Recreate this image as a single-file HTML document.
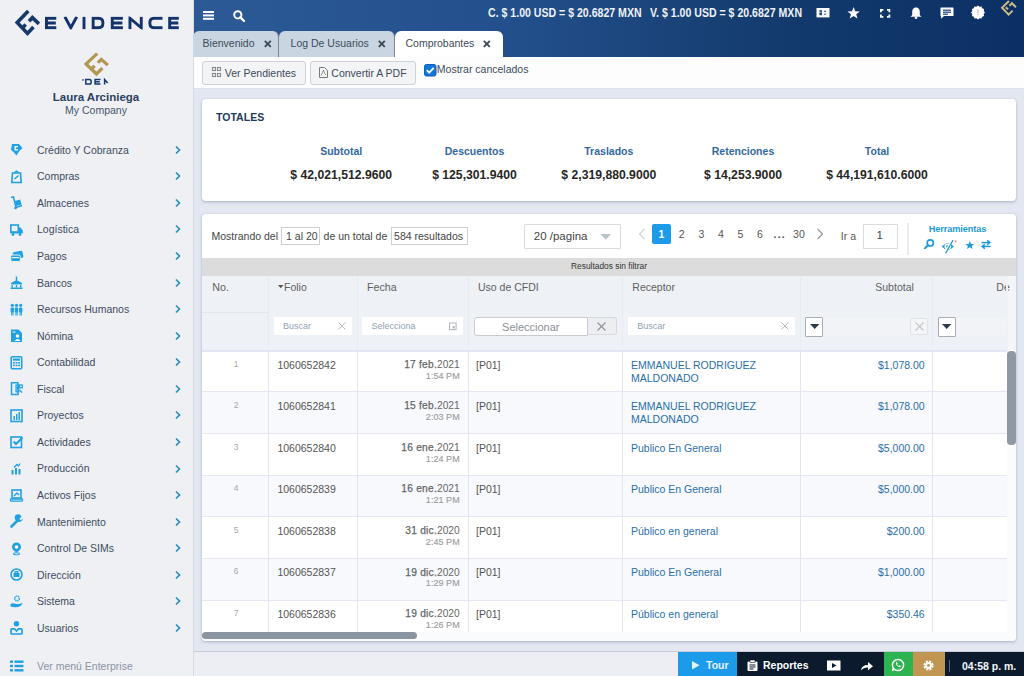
<!DOCTYPE html>
<html><head><meta charset="utf-8">
<style>
*{box-sizing:border-box;margin:0;padding:0}
html,body{width:1024px;height:676px;overflow:hidden;font-family:"Liberation Sans",sans-serif;background:#e4e8f1;position:relative}
.a{position:absolute}
.tx{line-height:1;white-space:nowrap}
svg{overflow:visible}
</style></head><body>

<div class="a" style="left:0px;top:0px;width:193px;height:676px;background:#eef0f4"></div>
<div class="a" style="left:193px;top:0px;width:1px;height:676px;background:#d5dae3"></div>
<svg class="a" style="left:0px;top:0px" width="60" height="45" viewBox="0 0 60 45"><g fill="none" stroke="#16386c" stroke-width="3.6" stroke-linejoin="miter" stroke-miterlimit="4"><polyline points="28.3,11.1 17.2,22.6 27.5,33.45 33.45,27.1"/><polyline points="22.4,27.9 25.7,24.6"/><polyline points="29,21.3 32.4,17.65 38.95,23.85"/></g></svg>
<svg class="a" style="left:0px;top:0px" width="190" height="40" viewBox="0 0 190 40"><defs><clipPath id="lc"><rect x="40" y="16.6" width="145" height="12.8"/></clipPath></defs><g fill="none" stroke="#13336a" stroke-width="2.9" clip-path="url(#lc)"><polyline points="56.3,18.25 46.45,18.25 46.45,27.75 56.3,27.75"/><line x1="46.45" y1="23.0" x2="55.8" y2="23.0"/><polyline points="64.85,16.8 70.8,27.75 76.75,16.8"/><line x1="84" y1="16.8" x2="84" y2="29.2"/><path d="M93.15,18.25 H98.5 Q102.95,18.25 102.95,23 Q102.95,27.75 98.5,27.75 H93.15 Z"/><polyline points="122.9,18.25 112.25,18.25 112.25,27.75 122.9,27.75"/><line x1="112.25" y1="23.0" x2="122.4" y2="23.0"/><polyline points="129.95,29.2 129.95,18.25 141.25,27.75 141.25,16.8"/><path d="M162.5,18.25 H154 Q149.85,18.25 149.85,23 Q149.85,27.75 154,27.75 H162.5"/><polyline points="178.8,18.25 169.64999999999998,18.25 169.64999999999998,27.75 178.8,27.75"/><line x1="169.64999999999998" y1="23.0" x2="178.3" y2="23.0"/></g></svg>
<svg class="a" style="left:0px;top:0px" width="130" height="90" viewBox="0 0 130 90"><g fill="none" stroke="#b39650" stroke-width="3.4" stroke-linejoin="miter" transform="translate(83.6,64) scale(1,0.91) translate(-14.7,-22.6)"><polyline points="28.3,11.1 17.2,22.6 27.5,33.45 33.45,27.1"/><polyline points="22.4,27.9 25.7,24.6"/><polyline points="29,21.3 32.4,17.65 38.95,23.85"/></g></svg>
<svg class="a" style="left:0px;top:0px" width="120" height="90" viewBox="0 0 120 90"><g fill="none" stroke="#16386c" stroke-width="1.5"><line x1="82.8" y1="79.2" x2="83.2" y2="80.6"/><path d="M85.8,79.6 H89.5 Q91.2,79.6 91.2,81.9 Q91.2,84 89.5,84 H85.8 Z"/><polyline points="100.5,79.6 95.1,79.6 95.1,84 100.5,84"/><line x1="95.1" y1="81.8" x2="99.8" y2="81.8"/><polyline points="104.6,84.6 104.6,79.6 107.6,83"/></g></svg>
<div class="a tx" style="left:-104.00px;width:400px;text-align:center;top:92.07px;font-size:11.5px;color:#2b3f5f;font-weight:bold;">Laura Arciniega</div>
<div class="a tx" style="left:-104.00px;width:400px;text-align:center;top:105.41px;font-size:10.5px;color:#46566e;">My Company</div>
<div class="a tx" style="left:37.00px;top:144.71px;font-size:10.5px;color:#404c5e;">Crédito Y Cobranza</div>
<svg class="a" style="left:173.7px;top:145px" width="8" height="10" viewBox="0 0 8 10"><polyline points="2,1.5 5.5,5 2,8.5" fill="none" stroke="#2589c2" stroke-width="1.6"/></svg>
<svg class="a" style="left:10px;top:143px" width="14" height="14" viewBox="0 0 14 14"><path d="M2,1 H9 L12.5,5 L9,8.5 L6.5,12.5 L3.5,9 L1,7 Z" fill="#1fa1e4"/><path d="M4.5,3 H8 V4.3 H5.8 V6.2 H8 V7.5 H4.5 Z" fill="#fff"/></svg>
<div class="a tx" style="left:37.00px;top:171.27px;font-size:10.5px;color:#404c5e;">Compras</div>
<svg class="a" style="left:173.7px;top:171px" width="8" height="10" viewBox="0 0 8 10"><polyline points="2,1.5 5.5,5 2,8.5" fill="none" stroke="#2589c2" stroke-width="1.6"/></svg>
<svg class="a" style="left:10px;top:170px" width="14" height="14" viewBox="0 0 14 14"><path d="M2.5,3 H10.5 L11.2,12.5 H1.8 Z" fill="none" stroke="#1fa1e4" stroke-width="1.6"/><path d="M4.5,3 Q6.5,-0.5 8.5,3" fill="none" stroke="#1fa1e4" stroke-width="1.4"/><path d="M4.5,9 L8.5,5.5" stroke="#1fa1e4" stroke-width="1.4"/></svg>
<div class="a tx" style="left:37.00px;top:197.83px;font-size:10.5px;color:#404c5e;">Almacenes</div>
<svg class="a" style="left:173.7px;top:198px" width="8" height="10" viewBox="0 0 8 10"><polyline points="2,1.5 5.5,5 2,8.5" fill="none" stroke="#2589c2" stroke-width="1.6"/></svg>
<svg class="a" style="left:10px;top:196px" width="14" height="14" viewBox="0 0 14 14"><path d="M1,1.5 L3.5,1 L6,11.5 L12,9.5" fill="none" stroke="#1fa1e4" stroke-width="1.5"/><rect x="5.5" y="4.2" width="5.5" height="5.2" fill="#1fa1e4" transform="rotate(-15 8 7)"/><circle cx="5.5" cy="12" r="1.3" fill="#1fa1e4"/></svg>
<div class="a tx" style="left:37.00px;top:224.39px;font-size:10.5px;color:#404c5e;">Logística</div>
<svg class="a" style="left:173.7px;top:224px" width="8" height="10" viewBox="0 0 8 10"><polyline points="2,1.5 5.5,5 2,8.5" fill="none" stroke="#2589c2" stroke-width="1.6"/></svg>
<svg class="a" style="left:10px;top:223px" width="14" height="14" viewBox="0 0 14 14"><rect x="0.8" y="2" width="7.5" height="7" fill="none" stroke="#1fa1e4" stroke-width="1.6"/><path d="M8.5,4.5 H10.5 L12.8,7.5 V10 H8.5 Z" fill="#1fa1e4"/><rect x="0.5" y="9" width="12" height="1.5" fill="#1fa1e4"/><circle cx="3" cy="11.5" r="1.4" fill="#1fa1e4"/><circle cx="10" cy="11.5" r="1.4" fill="#1fa1e4"/></svg>
<div class="a tx" style="left:37.00px;top:250.95px;font-size:10.5px;color:#404c5e;">Pagos</div>
<svg class="a" style="left:173.7px;top:251px" width="8" height="10" viewBox="0 0 8 10"><polyline points="2,1.5 5.5,5 2,8.5" fill="none" stroke="#2589c2" stroke-width="1.6"/></svg>
<svg class="a" style="left:10px;top:250px" width="14" height="14" viewBox="0 0 14 14"><rect x="3" y="1.5" width="10" height="7" rx="1.5" fill="#1fa1e4" transform="rotate(-12 8 5)"/><rect x="0.8" y="5" width="9.5" height="6.5" rx="1.5" fill="#1fa1e4" stroke="#eef0f4" stroke-width="1"/><rect x="2" y="7" width="7" height="1.2" fill="#eef0f4"/></svg>
<div class="a tx" style="left:37.00px;top:277.51px;font-size:10.5px;color:#404c5e;">Bancos</div>
<svg class="a" style="left:173.7px;top:278px" width="8" height="10" viewBox="0 0 8 10"><polyline points="2,1.5 5.5,5 2,8.5" fill="none" stroke="#2589c2" stroke-width="1.6"/></svg>
<svg class="a" style="left:10px;top:276px" width="14" height="14" viewBox="0 0 14 14"><path d="M6.5,0.5 V4" stroke="#1fa1e4" stroke-width="1.5"/><path d="M1,7 L6.5,4 L12,7 Z" fill="#1fa1e4"/><rect x="1" y="7" width="11" height="1.4" fill="#1fa1e4"/><rect x="1.5" y="9" width="1.4" height="2.5" fill="#1fa1e4"/><rect x="5.8" y="9" width="1.4" height="2.5" fill="#1fa1e4"/><rect x="10" y="9" width="1.4" height="2.5" fill="#1fa1e4"/><rect x="0.5" y="11.5" width="12" height="1.5" fill="#1fa1e4"/></svg>
<div class="a tx" style="left:37.00px;top:304.07px;font-size:10.5px;color:#404c5e;">Recursos Humanos</div>
<svg class="a" style="left:173.7px;top:304px" width="8" height="10" viewBox="0 0 8 10"><polyline points="2,1.5 5.5,5 2,8.5" fill="none" stroke="#2589c2" stroke-width="1.6"/></svg>
<svg class="a" style="left:10px;top:303px" width="14" height="14" viewBox="0 0 14 14"><g fill="#1fa1e4"><circle cx="2.3" cy="2.3" r="1.6"/><circle cx="6.5" cy="2.3" r="1.6"/><circle cx="10.7" cy="2.3" r="1.6"/><rect x="0.6" y="4.5" width="3.4" height="5" rx="1"/><rect x="4.8" y="4.5" width="3.4" height="5" rx="1"/><rect x="9" y="4.5" width="3.4" height="5" rx="1"/><rect x="1.2" y="9" width="1" height="3.5"/><rect x="2.5" y="9" width="1" height="3.5"/><rect x="5.4" y="9" width="1" height="3.5"/><rect x="6.7" y="9" width="1" height="3.5"/><rect x="9.6" y="9" width="1" height="3.5"/><rect x="10.9" y="9" width="1" height="3.5"/></g></svg>
<div class="a tx" style="left:37.00px;top:330.63px;font-size:10.5px;color:#404c5e;">Nómina</div>
<svg class="a" style="left:173.7px;top:331px" width="8" height="10" viewBox="0 0 8 10"><polyline points="2,1.5 5.5,5 2,8.5" fill="none" stroke="#2589c2" stroke-width="1.6"/></svg>
<svg class="a" style="left:10px;top:329px" width="14" height="14" viewBox="0 0 14 14"><path d="M1,0.5 H8.5 L12,4 V13 H1 Z" fill="#1fa1e4"/><circle cx="7.5" cy="7" r="1.8" fill="#fff"/><path d="M4.5,12 Q7.5,8 10.5,12 Z" fill="#fff"/><rect x="2.5" y="2.5" width="3" height="1" fill="#fff"/></svg>
<div class="a tx" style="left:37.00px;top:357.19px;font-size:10.5px;color:#404c5e;">Contabilidad</div>
<svg class="a" style="left:173.7px;top:357px" width="8" height="10" viewBox="0 0 8 10"><polyline points="2,1.5 5.5,5 2,8.5" fill="none" stroke="#2589c2" stroke-width="1.6"/></svg>
<svg class="a" style="left:10px;top:356px" width="14" height="14" viewBox="0 0 14 14"><rect x="1.2" y="0.8" width="10.5" height="12" rx="1" fill="none" stroke="#1fa1e4" stroke-width="1.6"/><rect x="3" y="2.5" width="7" height="2.2" fill="#1fa1e4"/><g fill="#1fa1e4"><rect x="3" y="6" width="1.8" height="1.6"/><rect x="5.6" y="6" width="1.8" height="1.6"/><rect x="8.2" y="6" width="1.8" height="1.6"/><rect x="3" y="8.6" width="1.8" height="1.6"/><rect x="5.6" y="8.6" width="1.8" height="1.6"/><rect x="8.2" y="8.6" width="1.8" height="1.6"/></g></svg>
<div class="a tx" style="left:37.00px;top:383.75px;font-size:10.5px;color:#404c5e;">Fiscal</div>
<svg class="a" style="left:173.7px;top:384px" width="8" height="10" viewBox="0 0 8 10"><polyline points="2,1.5 5.5,5 2,8.5" fill="none" stroke="#2589c2" stroke-width="1.6"/></svg>
<svg class="a" style="left:10px;top:382px" width="14" height="14" viewBox="0 0 14 14"><path d="M1.5,0.8 H8 V12.5 H1.5 Z" fill="none" stroke="#1fa1e4" stroke-width="1.5"/><g fill="none" stroke="#1fa1e4" stroke-width="1.2"><rect x="6" y="3" width="2.8" height="2.8"/><rect x="9.5" y="3" width="2.8" height="2.8"/><rect x="6" y="7" width="2.8" height="2.8"/></g><path d="M9.5,8 L12,10.5" stroke="#1fa1e4" stroke-width="1.2"/></svg>
<div class="a tx" style="left:37.00px;top:410.31px;font-size:10.5px;color:#404c5e;">Proyectos</div>
<svg class="a" style="left:173.7px;top:410px" width="8" height="10" viewBox="0 0 8 10"><polyline points="2,1.5 5.5,5 2,8.5" fill="none" stroke="#2589c2" stroke-width="1.6"/></svg>
<svg class="a" style="left:10px;top:409px" width="14" height="14" viewBox="0 0 14 14"><rect x="1" y="1" width="11" height="11.5" fill="none" stroke="#1fa1e4" stroke-width="1.6"/><g fill="#1fa1e4"><rect x="3.5" y="7" width="1.5" height="4"/><rect x="6" y="5" width="1.5" height="6"/><rect x="8.5" y="3" width="1.5" height="8"/></g></svg>
<div class="a tx" style="left:37.00px;top:436.87px;font-size:10.5px;color:#404c5e;">Actividades</div>
<svg class="a" style="left:173.7px;top:437px" width="8" height="10" viewBox="0 0 8 10"><polyline points="2,1.5 5.5,5 2,8.5" fill="none" stroke="#2589c2" stroke-width="1.6"/></svg>
<svg class="a" style="left:10px;top:435px" width="14" height="14" viewBox="0 0 14 14"><rect x="1" y="2" width="10.5" height="10.5" fill="none" stroke="#1fa1e4" stroke-width="1.6"/><polyline points="3.5,6.5 6,9 12.5,2.5" fill="none" stroke="#1fa1e4" stroke-width="2"/></svg>
<div class="a tx" style="left:37.00px;top:463.43px;font-size:10.5px;color:#404c5e;">Producción</div>
<svg class="a" style="left:173.7px;top:464px" width="8" height="10" viewBox="0 0 8 10"><polyline points="2,1.5 5.5,5 2,8.5" fill="none" stroke="#2589c2" stroke-width="1.6"/></svg>
<svg class="a" style="left:10px;top:462px" width="14" height="14" viewBox="0 0 14 14"><g fill="#1fa1e4"><rect x="1.5" y="8" width="2" height="4.5"/><rect x="5" y="6" width="2" height="6.5"/><rect x="8.5" y="7" width="2" height="5.5"/></g><path d="M4,5.5 L7,2.5 L8.5,4 L10,1.5" fill="none" stroke="#1fa1e4" stroke-width="1.3"/></svg>
<div class="a tx" style="left:37.00px;top:489.99px;font-size:10.5px;color:#404c5e;">Activos Fijos</div>
<svg class="a" style="left:173.7px;top:490px" width="8" height="10" viewBox="0 0 8 10"><polyline points="2,1.5 5.5,5 2,8.5" fill="none" stroke="#2589c2" stroke-width="1.6"/></svg>
<svg class="a" style="left:10px;top:489px" width="14" height="14" viewBox="0 0 14 14"><rect x="2" y="1" width="9" height="8" fill="none" stroke="#1fa1e4" stroke-width="1.6"/><path d="M4,7 L7,4 L9,6" fill="none" stroke="#1fa1e4" stroke-width="1.4"/><rect x="0.5" y="10" width="12" height="2.2" rx="0.8" fill="none" stroke="#1fa1e4" stroke-width="1.3"/></svg>
<div class="a tx" style="left:37.00px;top:516.55px;font-size:10.5px;color:#404c5e;">Mantenimiento</div>
<svg class="a" style="left:173.7px;top:517px" width="8" height="10" viewBox="0 0 8 10"><polyline points="2,1.5 5.5,5 2,8.5" fill="none" stroke="#2589c2" stroke-width="1.6"/></svg>
<svg class="a" style="left:10px;top:515px" width="14" height="14" viewBox="0 0 14 14"><path d="M1.5,11.5 L7.5,5.5" stroke="#1fa1e4" stroke-width="2.6" stroke-linecap="round"/><path d="M7,6 A3.5,3.5 0 1 1 11.5,1.8 L9.5,3.8 L10,4.8 L11,5.2 L12.8,3.2 A3.5,3.5 0 0 1 7,6Z" fill="#1fa1e4"/></svg>
<div class="a tx" style="left:37.00px;top:543.11px;font-size:10.5px;color:#404c5e;">Control De SIMs</div>
<svg class="a" style="left:173.7px;top:543px" width="8" height="10" viewBox="0 0 8 10"><polyline points="2,1.5 5.5,5 2,8.5" fill="none" stroke="#2589c2" stroke-width="1.6"/></svg>
<svg class="a" style="left:10px;top:542px" width="14" height="14" viewBox="0 0 14 14"><path d="M6.5,0.5 A4.5,4.5 0 0 1 11,5 C11,8 6.5,10.5 6.5,10.5 C6.5,10.5 2,8 2,5 A4.5,4.5 0 0 1 6.5,0.5Z" fill="#1fa1e4"/><circle cx="6.5" cy="5" r="1.8" fill="#fff"/><ellipse cx="6.5" cy="11.8" rx="3.5" ry="1" fill="none" stroke="#1fa1e4" stroke-width="1"/></svg>
<div class="a tx" style="left:37.00px;top:569.67px;font-size:10.5px;color:#404c5e;">Dirección</div>
<svg class="a" style="left:173.7px;top:570px" width="8" height="10" viewBox="0 0 8 10"><polyline points="2,1.5 5.5,5 2,8.5" fill="none" stroke="#2589c2" stroke-width="1.6"/></svg>
<svg class="a" style="left:10px;top:568px" width="14" height="14" viewBox="0 0 14 14"><circle cx="6.5" cy="6.5" r="5.5" fill="none" stroke="#1fa1e4" stroke-width="1.6"/><rect x="3.5" y="5" width="6" height="4" fill="#1fa1e4"/><rect x="5" y="3.5" width="3" height="1.5" fill="none" stroke="#1fa1e4" stroke-width="1"/></svg>
<div class="a tx" style="left:37.00px;top:596.23px;font-size:10.5px;color:#404c5e;">Sistema</div>
<svg class="a" style="left:173.7px;top:596px" width="8" height="10" viewBox="0 0 8 10"><polyline points="2,1.5 5.5,5 2,8.5" fill="none" stroke="#2589c2" stroke-width="1.6"/></svg>
<svg class="a" style="left:10px;top:595px" width="14" height="14" viewBox="0 0 14 14"><circle cx="7" cy="3.5" r="2.3" fill="none" stroke="#1fa1e4" stroke-width="1.6" stroke-dasharray="1.2 0.6"/><path d="M0.5,9 Q3,7.5 6,9 H9.5 Q11,8.5 12.5,7.5 Q12,11 8,12 Q4,12.5 0.5,11.5Z" fill="#1fa1e4"/></svg>
<div class="a tx" style="left:37.00px;top:622.79px;font-size:10.5px;color:#404c5e;">Usuarios</div>
<svg class="a" style="left:173.7px;top:623px" width="8" height="10" viewBox="0 0 8 10"><polyline points="2,1.5 5.5,5 2,8.5" fill="none" stroke="#2589c2" stroke-width="1.6"/></svg>
<svg class="a" style="left:10px;top:621px" width="14" height="14" viewBox="0 0 14 14"><circle cx="6.5" cy="2.8" r="2.7" fill="#1fa1e4"/><path d="M1.8,7.8 H4.5 L6.5,10 L8.5,7.8 H11.2 Q12,7.8 12,8.8 V12 Q12,13 11,13 H2 Q1,13 1,12 V8.8 Q1,7.8 1.8,7.8Z" fill="none" stroke="#1fa1e4" stroke-width="1.7"/></svg>
<div class="a tx" style="left:37.00px;top:661.11px;font-size:10.5px;color:#8a93a3;">Ver menú Enterprise</div>
<svg class="a" style="left:10px;top:660px" width="14" height="12" viewBox="0 0 14 12"><g fill="#1fa1e4"><rect x="0" y="0.5" width="3" height="2.4"/><rect x="4.5" y="0.5" width="9" height="2.4"/><rect x="0" y="4.8" width="3" height="2.4"/><rect x="4.5" y="4.8" width="9" height="2.4"/><rect x="0" y="9.1" width="3" height="2.4"/><rect x="4.5" y="9.1" width="9" height="2.4"/></g></svg>
<div class="a" style="left:194px;top:0px;width:830px;height:57px;background:linear-gradient(90deg,#2c5a97 0%,#24518e 35%,#133a6c 72%,#0b3065 100%)"></div>
<svg class="a" style="left:203px;top:11px" width="11" height="9" viewBox="0 0 11 9"><g fill="#fff"><rect x="0" y="0" width="11" height="2"/><rect x="0" y="3.4" width="11" height="2"/><rect x="0" y="6.8" width="11" height="2"/></g></svg>
<svg class="a" style="left:233px;top:10px" width="12" height="12" viewBox="0 0 12 12"><circle cx="4.8" cy="4.8" r="3.6" fill="none" stroke="#fff" stroke-width="2"/><line x1="7.4" y1="7.4" x2="11" y2="11" stroke="#fff" stroke-width="2.4" stroke-linecap="round"/></svg>
<div class="a tx" style="left:487.50px;top:6.57px;font-size:12.2px;color:#eef2f8;font-weight:bold;transform:scaleX(0.867);transform-origin:0 0;">C. $ 1.00 USD = $ 20.6827 MXN</div>
<div class="a tx" style="left:650.00px;top:6.57px;font-size:12.2px;color:#eef2f8;font-weight:bold;transform:scaleX(0.867);transform-origin:0 0;">V. $ 1.00 USD = $ 20.6827 MXN</div>
<svg class="a" style="left:816px;top:8px" width="14" height="10" viewBox="0 0 14 10"><rect x="0.5" y="0" width="13" height="9.4" fill="#ffffff"/><g fill="#1a4377"><rect x="3.4" y="2.2" width="2.6" height="1.6"/><rect x="3.4" y="4.4" width="2.6" height="2.8"/><circle cx="9" cy="3.4" r="0.8"/><circle cx="9" cy="6.2" r="0.8"/></g></svg>
<svg class="a" style="left:847px;top:7px" width="14" height="12" viewBox="0 0 14 12"><polygon points="6.6,0 8.2,4.3 12.8,4.4 9.2,7.2 10.5,11.6 6.6,9 2.7,11.6 4,7.2 0.4,4.4 5,4.3" fill="#ffffff"/></svg>
<svg class="a" style="left:880px;top:9px" width="11" height="9" viewBox="0 0 11 9"><g fill="none" stroke="#ffffff" stroke-width="1.8"><polyline points="0.9,3.2 0.9,0.9 3.4,0.9"/><polyline points="7,0.9 9.4,0.9 9.4,3.2"/><polyline points="0.9,5.6 0.9,7.9 3.4,7.9"/><polyline points="7,7.9 9.4,7.9 9.4,5.6"/></g></svg>
<svg class="a" style="left:910px;top:7px" width="12" height="12" viewBox="0 0 12 12"><path d="M6,0.5 C3,0.5 2.2,3 2.2,5 L2.2,8 L0.5,9.8 L11.5,9.8 L9.8,8 L9.8,5 C9.8,3 9,0.5 6,0.5Z" fill="#ffffff"/><circle cx="6" cy="10.8" r="1.3" fill="#ffffff"/></svg>
<svg class="a" style="left:940px;top:7px" width="14" height="12" viewBox="0 0 14 12"><path d="M1,0.5 H13 Q13.5,0.5 13.5,1 V8.5 Q13.5,9 13,9 H4 L1,11.8 V9 Q0.5,9 0.5,8.5 V1 Q0.5,0.5 1,0.5Z" fill="#ffffff"/><g fill="#1a4377"><rect x="3" y="2.6" width="8" height="1.2"/><rect x="3" y="4.6" width="8" height="1.2"/><rect x="3" y="6.6" width="5" height="1.2"/></g></svg>
<svg class="a" style="left:971px;top:6px" width="14" height="13" viewBox="0 0 14 13"><polygon points="14.00,6.50 12.70,8.03 13.06,10.00 11.17,10.67 10.50,12.56 8.53,12.20 7.00,13.50 5.47,12.20 3.50,12.56 2.83,10.67 0.94,10.00 1.30,8.03 0.00,6.50 1.30,4.97 0.94,3.00 2.83,2.33 3.50,0.44 5.47,0.80 7.00,-0.50 8.53,0.80 10.50,0.44 11.17,2.33 13.06,3.00 12.70,4.97" fill="#ffffff"/><rect x="6.3" y="3.2" width="1.4" height="4.2" fill="#c8cdd6"/><rect x="6.3" y="8.2" width="1.4" height="1.3" fill="#c8cdd6"/></svg>
<svg class="a" style="left:1000px;top:0px" width="20" height="17" viewBox="0 0 20 17"><g fill="none" stroke="#cdb882" stroke-width="2"><polyline points="9,1 2,7.8 8.6,14.6 12.6,10.6"/><polyline points="5.8,7.2 8,9.4"/><polyline points="9.4,5.8 12,3.2 16,7.2"/></g></svg>
<div class="a" style="left:193px;top:31px;width:86px;height:26px;background:#c9d5e0;border-radius:6px 6px 0 0;border-right:1.2px solid #7a8794;"></div>
<div class="a tx" style="left:202.60px;top:38.21px;font-size:10.5px;color:#3c4b5c;">Bienvenido</div>
<svg class="a" style="left:263.5px;top:40px" width="8" height="8" viewBox="0 0 8 8"><g stroke="#3c4b5c" stroke-width="1.9"><line x1="0.8" y1="0.8" x2="6.8" y2="6.8"/><line x1="6.8" y1="0.8" x2="0.8" y2="6.8"/></g></svg>
<div class="a" style="left:279.2px;top:31px;width:115.80000000000001px;height:26px;background:#c9d5e0;border-radius:6px 6px 0 0;border-right:1.2px solid #7a8794;"></div>
<div class="a tx" style="left:290.60px;top:38.21px;font-size:10.5px;color:#3c4b5c;">Log De Usuarios</div>
<svg class="a" style="left:378.3px;top:40px" width="8" height="8" viewBox="0 0 8 8"><g stroke="#3c4b5c" stroke-width="1.9"><line x1="0.8" y1="0.8" x2="6.8" y2="6.8"/><line x1="6.8" y1="0.8" x2="0.8" y2="6.8"/></g></svg>
<div class="a" style="left:395.2px;top:31px;width:107.80000000000001px;height:26px;background:#ffffff;border-radius:6px 6px 0 0;"></div>
<div class="a tx" style="left:405.50px;top:38.21px;font-size:10.5px;color:#3c4b5c;">Comprobantes</div>
<svg class="a" style="left:483px;top:40px" width="8" height="8" viewBox="0 0 8 8"><g stroke="#3c4b5c" stroke-width="1.9"><line x1="0.8" y1="0.8" x2="6.8" y2="6.8"/><line x1="6.8" y1="0.8" x2="0.8" y2="6.8"/></g></svg>
<div class="a" style="left:194px;top:57px;width:830px;height:32px;background:#fdfdfe;border-bottom:1px solid #dde2ea"></div>
<div class="a" style="left:202px;top:61px;width:104px;height:24px;background:#f3f4f6;border:1px solid #cdd1d8;border-radius:3px;"></div>
<div class="a tx" style="left:224.80px;top:67.71px;font-size:10.5px;color:#3c4b5c;">Ver Pendientes</div>
<div class="a" style="left:310px;top:61px;width:106px;height:24px;background:#f3f4f6;border:1px solid #cdd1d8;border-radius:3px;"></div>
<div class="a tx" style="left:331.30px;top:67.71px;font-size:10.5px;color:#3c4b5c;">Convertir A PDF</div>
<svg class="a" style="left:212px;top:67px" width="9" height="11" viewBox="0 0 9 11"><g fill="none" stroke="#8a8a8a" stroke-width="1.1"><rect x="0.5" y="0.5" width="3" height="3"/><rect x="5.5" y="0.5" width="3" height="3"/><rect x="0.5" y="6.5" width="3" height="3"/><rect x="5.5" y="6.5" width="3" height="3"/></g></svg>
<svg class="a" style="left:319px;top:67px" width="9" height="11" viewBox="0 0 9 11"><path d="M0.5,0.5 H5.5 L8.5,3.5 V10.5 H0.5 Z" fill="none" stroke="#7a7a7a" stroke-width="1"/><path d="M2,8.5 Q4,5 4.5,3 Q5,6.5 7,8" fill="none" stroke="#7a7a7a" stroke-width="0.8"/></svg>
<svg class="a" style="left:424px;top:64px" width="13" height="13" viewBox="0 0 13 13"><rect x="0.5" y="0.5" width="11.5" height="11.5" rx="2" fill="#1475d9" stroke="#0e5fb8" stroke-width="1"/><polyline points="2.8,6.2 5.2,8.6 9.8,3.8" fill="none" stroke="#fff" stroke-width="1.8"/></svg>
<div class="a tx" style="left:436.80px;top:63.61px;font-size:10.5px;color:#3c4b5c;">Mostrar cancelados</div>
<div class="a" style="left:194px;top:89px;width:830px;height:563px;background:#e3e7f1"></div>
<div class="a" style="left:202px;top:99px;width:814px;height:102px;background:#fff;border-radius:4px;box-shadow:0 1px 3px rgba(110,120,150,.5)"></div>
<div class="a tx" style="left:215.90px;top:111.71px;font-size:10.5px;color:#1c3a5a;font-weight:bold;letter-spacing:0.05px;">TOTALES</div>
<div class="a tx" style="left:141.20px;width:400px;text-align:center;top:146.11px;font-size:10.5px;color:#33689f;font-weight:bold;">Subtotal</div>
<div class="a tx" style="left:141.20px;width:400px;text-align:center;top:168.87px;font-size:12.2px;color:#262626;font-weight:bold;">$ 42,021,512.9600</div>
<div class="a tx" style="left:274.50px;width:400px;text-align:center;top:146.11px;font-size:10.5px;color:#33689f;font-weight:bold;">Descuentos</div>
<div class="a tx" style="left:274.50px;width:400px;text-align:center;top:168.87px;font-size:12.2px;color:#262626;font-weight:bold;">$ 125,301.9400</div>
<div class="a tx" style="left:408.80px;width:400px;text-align:center;top:146.11px;font-size:10.5px;color:#33689f;font-weight:bold;">Traslados</div>
<div class="a tx" style="left:408.80px;width:400px;text-align:center;top:168.87px;font-size:12.2px;color:#262626;font-weight:bold;">$ 2,319,880.9000</div>
<div class="a tx" style="left:543.00px;width:400px;text-align:center;top:146.11px;font-size:10.5px;color:#33689f;font-weight:bold;">Retenciones</div>
<div class="a tx" style="left:543.00px;width:400px;text-align:center;top:168.87px;font-size:12.2px;color:#262626;font-weight:bold;">$ 14,253.9000</div>
<div class="a tx" style="left:677.00px;width:400px;text-align:center;top:146.11px;font-size:10.5px;color:#33689f;font-weight:bold;">Total</div>
<div class="a tx" style="left:677.00px;width:400px;text-align:center;top:168.87px;font-size:12.2px;color:#262626;font-weight:bold;">$ 44,191,610.6000</div>
<div class="a" style="left:202px;top:213.5px;width:814px;height:427.5px;background:#fff;border-radius:4px;box-shadow:0 1px 3px rgba(110,120,150,.5)"></div>
<div class="a tx" style="left:211.50px;top:230.71px;font-size:10.5px;color:#444;">Mostrando del</div>
<div class="a" style="left:281px;top:226.5px;width:39px;height:18.5px;border:1px solid #cfcfcf;background:#fff"></div>
<div class="a tx" style="left:286.10px;top:230.71px;font-size:10.5px;color:#444;">1 al 20</div>
<div class="a tx" style="left:323.60px;top:230.71px;font-size:10.5px;color:#444;">de un total de</div>
<div class="a" style="left:391px;top:226.5px;width:77px;height:18.5px;border:1px solid #cfcfcf;background:#fff"></div>
<div class="a tx" style="left:394.10px;top:230.71px;font-size:10.5px;color:#444;">584 resultados</div>
<div class="a" style="left:524px;top:224px;width:97px;height:24.5px;border:1px solid #dcdcdc;background:#fff;border-radius:1px"></div>
<div class="a tx" style="left:533.80px;top:231.07px;font-size:11.5px;color:#444;">20 /pagina</div>
<svg class="a" style="left:600px;top:234px" width="12" height="7" viewBox="0 0 12 7"><polygon points="0.5,0 11,0 5.75,5.8" fill="#b8c4c8"/></svg>
<svg class="a" style="left:638px;top:228px" width="8" height="13" viewBox="0 0 8 13"><polyline points="6.5,0.8 1.5,6 6.5,11.2" fill="none" stroke="#d0d0d0" stroke-width="1.2"/></svg>
<div class="a" style="left:652px;top:224.2px;width:19px;height:19.5px;background:#1b9be9;border-radius:2px"></div>
<div class="a tx" style="left:461.50px;width:400px;text-align:center;top:229.11px;font-size:10.5px;color:#ffffff;font-weight:bold;">1</div>
<div class="a tx" style="left:481.70px;width:400px;text-align:center;top:229.11px;font-size:10.5px;color:#555;">2</div>
<div class="a tx" style="left:501.30px;width:400px;text-align:center;top:229.11px;font-size:10.5px;color:#555;">3</div>
<div class="a tx" style="left:520.80px;width:400px;text-align:center;top:229.11px;font-size:10.5px;color:#555;">4</div>
<div class="a tx" style="left:540.30px;width:400px;text-align:center;top:229.11px;font-size:10.5px;color:#555;">5</div>
<div class="a tx" style="left:559.90px;width:400px;text-align:center;top:229.11px;font-size:10.5px;color:#555;">6</div>
<div class="a tx" style="left:598.90px;width:400px;text-align:center;top:229.11px;font-size:10.5px;color:#555;">30</div>
<div class="a tx" style="left:579.80px;width:400px;text-align:center;top:229.11px;font-size:10.5px;color:#555;font-weight:bold;letter-spacing:1.2px">...</div>
<svg class="a" style="left:816px;top:228px" width="8" height="13" viewBox="0 0 8 13"><polyline points="1.5,0.8 6.5,6 1.5,11.2" fill="none" stroke="#8c8c8c" stroke-width="1.1"/></svg>
<div class="a tx" style="left:840.80px;top:231.11px;font-size:10.5px;color:#555;">Ir a</div>
<div class="a" style="left:862.5px;top:224.3px;width:35.5px;height:24.69999999999999px;border:1px solid #dcdcdc;background:#fff"></div>
<div class="a tx" style="left:679.60px;width:400px;text-align:center;top:230.27px;font-size:11.5px;color:#444;">1</div>
<div class="a" style="left:907px;top:222.5px;width:2px;height:32.5px;background:#ececec"></div>
<div class="a tx" style="left:757.50px;width:400px;text-align:center;top:225.21px;font-size:9.2px;color:#1e9ad4;font-weight:bold;letter-spacing:-0.1px">Herramientas</div>
<svg class="a" style="left:924px;top:239px" width="11" height="10" viewBox="0 0 11 10"><circle cx="6.3" cy="3.9" r="3.1" fill="none" stroke="#1c9ad8" stroke-width="1.7"/><line x1="4.1" y1="6.1" x2="1" y2="9.2" stroke="#1c9ad8" stroke-width="2" stroke-linecap="round"/></svg>
<svg class="a" style="left:941px;top:239px" width="17" height="14" viewBox="0 0 17 14"><path d="M0.8,7.5 Q6.8,0.5 12.8,7.5 Q6.8,14.5 0.8,7.5Z" fill="#1c9ad8"/><ellipse cx="6.8" cy="7.5" rx="3.4" ry="2.9" fill="#fff"/><circle cx="6.8" cy="7.5" r="1.6" fill="#1c9ad8"/><line x1="11" y1="0.6" x2="3.6" y2="13.8" stroke="#fff" stroke-width="1.3"/><line x1="12.1" y1="1" x2="4.7" y2="14.2" stroke="#1c9ad8" stroke-width="1.3"/><text x="13.2" y="5.6" font-size="7" fill="#e86a6a" font-family="Liberation Sans">*</text></svg>
<svg class="a" style="left:965px;top:241px" width="10" height="8" viewBox="0 0 10 8"><polygon points="4.8,0 6,3 9.3,3.1 6.7,5 7.6,8 4.8,6.3 2,8 2.9,5 0.3,3.1 3.6,3" fill="#1c9ad8"/></svg>
<svg class="a" style="left:981px;top:240px" width="10" height="9" viewBox="0 0 10 9"><g fill="none" stroke="#1c9ad8" stroke-width="1.5"><polyline points="0.5,2.6 8.5,2.6"/><polyline points="6.2,0.4 8.8,2.6 6.2,4.8"/><polyline points="1.5,6.4 9.5,6.4"/><polyline points="3.8,4.2 1.2,6.4 3.8,8.6"/></g></svg>
<div class="a" style="left:202px;top:258px;width:814px;height:17.5px;background:#dcdcdc"></div>
<div class="a tx" style="left:409.00px;width:400px;text-align:center;top:262.19px;font-size:8.4px;color:#333;">Resultados sin filtrar</div>
<div class="a" style="left:202px;top:275.5px;width:806px;height:74.5px;background:#eef2f7"></div>
<div class="a" style="left:1008px;top:275.5px;width:8px;height:74.5px;background:#f3f5f8"></div>
<div class="a" style="left:268.3px;top:275.5px;width:1.0px;height:74.5px;background:#e7ebf2"></div>
<div class="a" style="left:357px;top:275.5px;width:1px;height:74.5px;background:#e7ebf2"></div>
<div class="a" style="left:468.4px;top:275.5px;width:1.0px;height:74.5px;background:#e7ebf2"></div>
<div class="a" style="left:622.2px;top:275.5px;width:1.0px;height:74.5px;background:#e7ebf2"></div>
<div class="a" style="left:800px;top:275.5px;width:1px;height:74.5px;background:#e7ebf2"></div>
<div class="a" style="left:932px;top:275.5px;width:1px;height:74.5px;background:#e7ebf2"></div>
<div class="a" style="left:202px;top:312px;width:67px;height:1px;background:#e2e6ee"></div>
<div class="a" style="left:202px;top:349.5px;width:806px;height:2.5px;background:#e4e5f3"></div>
<div class="a tx" style="left:212.30px;top:282.24px;font-size:10.7px;color:#606060;">No.</div>
<svg class="a" style="left:278px;top:285px" width="6" height="4" viewBox="0 0 6 4"><polygon points="0,0 5.5,0 2.75,3.2" fill="#555"/></svg>
<div class="a tx" style="left:284.00px;top:282.41px;font-size:10.5px;color:#606060;">Folio</div>
<div class="a tx" style="left:367.00px;top:282.24px;font-size:10.7px;color:#606060;">Fecha</div>
<div class="a tx" style="left:478.00px;top:282.41px;font-size:10.5px;color:#606060;">Uso de CFDI</div>
<div class="a tx" style="left:632.30px;top:282.41px;font-size:10.5px;color:#606060;">Receptor</div>
<div class="a tx" style="right:110.20px;top:282.41px;font-size:10.5px;color:#606060;">Subtotal</div>
<div class="a tx" style="left:996.30px;top:282.41px;font-size:10.5px;color:#606060;">De</div>
<div class="a" style="left:1006px;top:276px;width:2px;height:74px;background:#eef2f7"></div>
<div class="a" style="left:274px;top:317px;width:78.39999999999998px;height:18px;background:#fff;border-radius:1px"></div>
<div class="a tx" style="left:283.00px;top:321.98px;font-size:9px;color:#8fa2b3;">Buscar</div>
<svg class="a" style="left:338px;top:322px" width="8" height="8" viewBox="0 0 8 8"><g stroke="#b0b4ba" stroke-width="1"><line x1="0.5" y1="0.5" x2="7.3" y2="7.3"/><line x1="7.3" y1="0.5" x2="0.5" y2="7.3"/></g></svg>
<div class="a" style="left:362.4px;top:317px;width:100.60000000000002px;height:18px;background:#fff;border-radius:1px"></div>
<div class="a tx" style="left:371.40px;top:321.98px;font-size:9px;color:#8fa2b3;">Selecciona</div>
<svg class="a" style="left:448.5px;top:322px" width="8" height="8" viewBox="0 0 8 8"><rect x="0.5" y="1" width="6.6" height="6.6" fill="none" stroke="#b0b4ba" stroke-width="1"/><rect x="3.6" y="4.2" width="2.2" height="2.2" fill="#b0b4ba"/></svg>
<div class="a" style="left:473.6px;top:317.2px;width:114.39999999999998px;height:19.30000000000001px;background:#fff;border:1px solid #c9cbcf;border-radius:3px 0 0 3px"></div>
<div class="a tx" style="left:330.80px;width:400px;text-align:center;top:321.69px;font-size:11px;color:#8a8f95;">Seleccionar</div>
<div class="a" style="left:587.5px;top:317.2px;width:29.799999999999955px;height:17.80000000000001px;background:#eceef2;border:1px solid #d6d9de;border-left:none;border-radius:0 3px 3px 0"></div>
<svg class="a" style="left:597px;top:322px" width="9" height="9" viewBox="0 0 9 9"><g stroke="#8c9199" stroke-width="1.1"><line x1="0.5" y1="0.5" x2="8.5" y2="8.5"/><line x1="8.5" y1="0.5" x2="0.5" y2="8.5"/></g></svg>
<div class="a" style="left:627.9px;top:317px;width:167.60000000000002px;height:18px;background:#fff;border-radius:1px"></div>
<div class="a tx" style="left:637.30px;top:321.98px;font-size:9px;color:#8fa2b3;">Buscar</div>
<svg class="a" style="left:781px;top:322px" width="8" height="8" viewBox="0 0 8 8"><g stroke="#b0b4ba" stroke-width="1"><line x1="0.5" y1="0.5" x2="7.3" y2="7.3"/><line x1="7.3" y1="0.5" x2="0.5" y2="7.3"/></g></svg>
<div class="a" style="left:805px;top:317px;width:18.399999999999977px;height:19.69999999999999px;background:#fff;border:1px solid #a9adb3;border-radius:1px"></div>
<svg class="a" style="left:809.5px;top:324px" width="10" height="6" viewBox="0 0 10 6"><polygon points="0,0 9.4,0 4.7,5" fill="#2f3a48"/></svg>
<div class="a" style="left:823.4px;top:318px;width:86.60000000000002px;height:17px;background:#f1f3f7"></div>
<div class="a" style="left:909.8px;top:318px;width:17.800000000000068px;height:17px;background:#f4f5f7;border:1px solid #e0e3e7;border-radius:2px"></div>
<svg class="a" style="left:914.5px;top:322px" width="9" height="9" viewBox="0 0 9 9"><g stroke="#c3c7cd" stroke-width="1.1"><line x1="0.5" y1="0.5" x2="8.5" y2="8.5"/><line x1="8.5" y1="0.5" x2="0.5" y2="8.5"/></g></svg>
<div class="a" style="left:937.6px;top:317px;width:18.600000000000023px;height:19.69999999999999px;background:#fff;border:1px solid #a9adb3;border-radius:1px"></div>
<svg class="a" style="left:942px;top:324px" width="10" height="6" viewBox="0 0 10 6"><polygon points="0,0 9.4,0 4.7,5" fill="#2f3a48"/></svg>
<div class="a" style="left:956.2px;top:318px;width:49.799999999999955px;height:17px;background:#f1f3f7"></div>
<div class="a" style="left:202px;top:352px;width:805px;height:39.95999999999998px;background:#ffffff"></div>
<div class="a tx" style="left:36.00px;width:400px;text-align:center;top:359.60px;font-size:8.5px;color:#a6a6a6;">1</div>
<div class="a tx" style="left:277.40px;top:359.51px;font-size:10.5px;color:#555;">1060652842</div>
<div class="a tx" style="right:564.3px;top:359.77px;font-size:10.2px;color:#666"><span style="letter-spacing:0.25px;-webkit-text-stroke:0.25px #666">17 feb.</span>2021</div>
<div class="a tx" style="right:564.30px;top:371.68px;font-size:9px;color:#9d9d9d;letter-spacing:0.05px;-webkit-text-stroke:0.15px #9d9d9d">1:54 PM</div>
<div class="a tx" style="left:476.00px;top:359.51px;font-size:10.5px;color:#555;">[P01]</div>
<div class="a tx" style="left:631.00px;top:359.51px;font-size:10.5px;color:#2b6fa8;">EMMANUEL RODRIGUEZ</div>
<div class="a tx" style="left:631.00px;top:372.61px;font-size:10.5px;color:#2b6fa8;">MALDONADO</div>
<div class="a tx" style="right:99.30px;top:359.51px;font-size:10.5px;color:#2b6fa8;">$1,078.00</div>
<div class="a" style="left:202px;top:391.96px;width:805px;height:41.660000000000025px;background:#f7f9fc"></div>
<div class="a" style="left:202px;top:391.46px;width:805px;height:1.0px;background:#e6e8f1"></div>
<div class="a tx" style="left:36.00px;width:400px;text-align:center;top:401.15px;font-size:8.5px;color:#a6a6a6;">2</div>
<div class="a tx" style="left:277.40px;top:401.06px;font-size:10.5px;color:#555;">1060652841</div>
<div class="a tx" style="right:564.3px;top:401.32px;font-size:10.2px;color:#666"><span style="letter-spacing:0.25px;-webkit-text-stroke:0.25px #666">15 feb.</span>2021</div>
<div class="a tx" style="right:564.30px;top:413.23px;font-size:9px;color:#9d9d9d;letter-spacing:0.05px;-webkit-text-stroke:0.15px #9d9d9d">2:03 PM</div>
<div class="a tx" style="left:476.00px;top:401.06px;font-size:10.5px;color:#555;">[P01]</div>
<div class="a tx" style="left:631.00px;top:401.06px;font-size:10.5px;color:#2b6fa8;">EMMANUEL RODRIGUEZ</div>
<div class="a tx" style="left:631.00px;top:414.16px;font-size:10.5px;color:#2b6fa8;">MALDONADO</div>
<div class="a tx" style="right:99.30px;top:401.06px;font-size:10.5px;color:#2b6fa8;">$1,078.00</div>
<div class="a" style="left:202px;top:433.62px;width:805px;height:41.65999999999997px;background:#ffffff"></div>
<div class="a" style="left:202px;top:433.12px;width:805px;height:1.0px;background:#e6e8f1"></div>
<div class="a tx" style="left:36.00px;width:400px;text-align:center;top:442.70px;font-size:8.5px;color:#a6a6a6;">3</div>
<div class="a tx" style="left:277.40px;top:442.61px;font-size:10.5px;color:#555;">1060652840</div>
<div class="a tx" style="right:564.3px;top:442.87px;font-size:10.2px;color:#666"><span style="letter-spacing:0.25px;-webkit-text-stroke:0.25px #666">16 ene.</span>2021</div>
<div class="a tx" style="right:564.30px;top:454.78px;font-size:9px;color:#9d9d9d;letter-spacing:0.05px;-webkit-text-stroke:0.15px #9d9d9d">1:24 PM</div>
<div class="a tx" style="left:476.00px;top:442.61px;font-size:10.5px;color:#555;">[P01]</div>
<div class="a tx" style="left:631.00px;top:442.61px;font-size:10.5px;color:#2b6fa8;">Publico En General</div>
<div class="a tx" style="right:99.30px;top:442.61px;font-size:10.5px;color:#2b6fa8;">$5,000.00</div>
<div class="a" style="left:202px;top:475.28px;width:805px;height:41.66000000000008px;background:#f7f9fc"></div>
<div class="a" style="left:202px;top:474.78px;width:805px;height:1.0px;background:#e6e8f1"></div>
<div class="a tx" style="left:36.00px;width:400px;text-align:center;top:484.25px;font-size:8.5px;color:#a6a6a6;">4</div>
<div class="a tx" style="left:277.40px;top:484.16px;font-size:10.5px;color:#555;">1060652839</div>
<div class="a tx" style="right:564.3px;top:484.42px;font-size:10.2px;color:#666"><span style="letter-spacing:0.25px;-webkit-text-stroke:0.25px #666">16 ene.</span>2021</div>
<div class="a tx" style="right:564.30px;top:496.33px;font-size:9px;color:#9d9d9d;letter-spacing:0.05px;-webkit-text-stroke:0.15px #9d9d9d">1:21 PM</div>
<div class="a tx" style="left:476.00px;top:484.16px;font-size:10.5px;color:#555;">[P01]</div>
<div class="a tx" style="left:631.00px;top:484.16px;font-size:10.5px;color:#2b6fa8;">Publico En General</div>
<div class="a tx" style="right:99.30px;top:484.16px;font-size:10.5px;color:#2b6fa8;">$5,000.00</div>
<div class="a" style="left:202px;top:516.94px;width:805px;height:41.65999999999997px;background:#ffffff"></div>
<div class="a" style="left:202px;top:516.44px;width:805px;height:1.0px;background:#e6e8f1"></div>
<div class="a tx" style="left:36.00px;width:400px;text-align:center;top:525.80px;font-size:8.5px;color:#a6a6a6;">5</div>
<div class="a tx" style="left:277.40px;top:525.71px;font-size:10.5px;color:#555;">1060652838</div>
<div class="a tx" style="right:564.3px;top:525.97px;font-size:10.2px;color:#666"><span style="letter-spacing:0.25px;-webkit-text-stroke:0.25px #666">31 dic.</span>2020</div>
<div class="a tx" style="right:564.30px;top:537.88px;font-size:9px;color:#9d9d9d;letter-spacing:0.05px;-webkit-text-stroke:0.15px #9d9d9d">2:45 PM</div>
<div class="a tx" style="left:476.00px;top:525.71px;font-size:10.5px;color:#555;">[P01]</div>
<div class="a tx" style="left:631.00px;top:525.71px;font-size:10.5px;color:#2b6fa8;">Público en general</div>
<div class="a tx" style="right:99.30px;top:525.71px;font-size:10.5px;color:#2b6fa8;">$200.00</div>
<div class="a" style="left:202px;top:558.6px;width:805px;height:41.65999999999997px;background:#f7f9fc"></div>
<div class="a" style="left:202px;top:558.1px;width:805px;height:1.0px;background:#e6e8f1"></div>
<div class="a tx" style="left:36.00px;width:400px;text-align:center;top:567.35px;font-size:8.5px;color:#a6a6a6;">6</div>
<div class="a tx" style="left:277.40px;top:567.26px;font-size:10.5px;color:#555;">1060652837</div>
<div class="a tx" style="right:564.3px;top:567.52px;font-size:10.2px;color:#666"><span style="letter-spacing:0.25px;-webkit-text-stroke:0.25px #666">19 dic.</span>2020</div>
<div class="a tx" style="right:564.30px;top:579.43px;font-size:9px;color:#9d9d9d;letter-spacing:0.05px;-webkit-text-stroke:0.15px #9d9d9d">1:29 PM</div>
<div class="a tx" style="left:476.00px;top:567.26px;font-size:10.5px;color:#555;">[P01]</div>
<div class="a tx" style="left:631.00px;top:567.26px;font-size:10.5px;color:#2b6fa8;">Publico En General</div>
<div class="a tx" style="right:99.30px;top:567.26px;font-size:10.5px;color:#2b6fa8;">$1,000.00</div>
<div class="a" style="left:202px;top:600.26px;width:805px;height:31.74000000000001px;background:#ffffff"></div>
<div class="a" style="left:202px;top:599.76px;width:805px;height:1.0px;background:#e6e8f1"></div>
<div class="a tx" style="left:36.00px;width:400px;text-align:center;top:608.90px;font-size:8.5px;color:#a6a6a6;">7</div>
<div class="a tx" style="left:277.40px;top:608.81px;font-size:10.5px;color:#555;">1060652836</div>
<div class="a tx" style="right:564.3px;top:609.07px;font-size:10.2px;color:#666"><span style="letter-spacing:0.25px;-webkit-text-stroke:0.25px #666">19 dic.</span>2020</div>
<div class="a tx" style="right:564.30px;top:620.98px;font-size:9px;color:#9d9d9d;letter-spacing:0.05px;-webkit-text-stroke:0.15px #9d9d9d">1:26 PM</div>
<div class="a tx" style="left:476.00px;top:608.81px;font-size:10.5px;color:#555;">[P01]</div>
<div class="a tx" style="left:631.00px;top:608.81px;font-size:10.5px;color:#2b6fa8;">Público en general</div>
<div class="a tx" style="right:99.30px;top:608.81px;font-size:10.5px;color:#2b6fa8;">$350.46</div>
<div class="a" style="left:268.3px;top:351px;width:1.0px;height:281px;background:#e3e6f0"></div>
<div class="a" style="left:357px;top:351px;width:1px;height:281px;background:#e3e6f0"></div>
<div class="a" style="left:468.4px;top:351px;width:1.0px;height:281px;background:#e3e6f0"></div>
<div class="a" style="left:622.2px;top:351px;width:1.0px;height:281px;background:#e3e6f0"></div>
<div class="a" style="left:800px;top:351px;width:1px;height:281px;background:#e3e6f0"></div>
<div class="a" style="left:932px;top:351px;width:1px;height:281px;background:#e3e6f0"></div>
<div class="a" style="left:1007px;top:351px;width:9px;height:281px;background:#fafbfc"></div>
<div class="a" style="left:1007px;top:351px;width:8.600000000000023px;height:94.39999999999998px;background:#8f98a3;border-radius:4px"></div>
<div class="a" style="left:202px;top:632px;width:814px;height:9px;background:#fafbfc;border-radius:0 0 4px 4px"></div>
<div class="a" style="left:202px;top:631.6px;width:215px;height:7.399999999999977px;background:#8a95a1;border-radius:4px"></div>
<div class="a" style="left:194px;top:651px;width:830px;height:1px;background:#c9ceda"></div>
<div class="a" style="left:194px;top:652px;width:830px;height:24px;background:#eceef3"></div>
<div class="a" style="left:678px;top:652px;width:59px;height:24px;background:#1b9be9"></div>
<div class="a" style="left:737px;top:652px;width:147px;height:24px;background:#0c1a2e"></div>
<div class="a" style="left:884px;top:652px;width:29px;height:24px;background:#2db350"></div>
<div class="a" style="left:913px;top:652px;width:32px;height:24px;background:#c19652"></div>
<div class="a" style="left:945px;top:652px;width:79px;height:24px;background:#0c1a2e"></div>
<svg class="a" style="left:692px;top:661px" width="8" height="9" viewBox="0 0 8 9"><polygon points="0,0 7.5,4.3 0,8.6" fill="#e6f3ff"/></svg>
<div class="a tx" style="left:706.00px;top:660.41px;font-size:10.5px;color:#e6f3ff;font-weight:bold;">Tour</div>
<svg class="a" style="left:747px;top:660px" width="11" height="11" viewBox="0 0 11 11"><rect x="0.5" y="1.5" width="10" height="9.5" rx="1" fill="#fff"/><rect x="3" y="0" width="5" height="2.6" fill="#fff" stroke="#0c1a2e" stroke-width="0.6"/><g fill="#0c1a2e"><rect x="2.5" y="4.5" width="6" height="1"/><rect x="2.5" y="6.5" width="6" height="1"/><rect x="2.5" y="8.5" width="4" height="1"/></g></svg>
<div class="a tx" style="left:763.00px;top:660.41px;font-size:10.5px;color:#ffffff;font-weight:bold;">Reportes</div>
<svg class="a" style="left:827px;top:660px" width="14" height="11" viewBox="0 0 14 11"><rect x="0" y="0.5" width="13.5" height="10" fill="#fff"/><polygon points="5,3 9.5,5.5 5,8" fill="#0c1a2e"/></svg>
<svg class="a" style="left:860px;top:661px" width="14" height="10" viewBox="0 0 14 10"><path d="M1,9.5 Q1.5,4 8,4 V1 L13,5.2 L8,9.2 V6.5 Q3.5,6.3 1,9.5Z" fill="#fff"/></svg>
<svg class="a" style="left:891px;top:658px" width="14" height="14" viewBox="0 0 14 14"><circle cx="7" cy="7" r="5.6" fill="none" stroke="#fff" stroke-width="1.5"/><path d="M1.6,13 L2.3,10" stroke="#fff" stroke-width="1.5"/><path d="M4.8,4.5 Q5,8.5 9.5,9.2 L9.8,8 L8.5,7.3 L7.8,8 Q6.2,7.3 6,6 L6.6,5.4 L6,4 Z" fill="#fff"/></svg>
<svg class="a" style="left:922px;top:659px" width="13" height="13" viewBox="0 0 13 13"><circle cx="6.5" cy="6.5" r="3.9" fill="none" stroke="#fff" stroke-width="2.4" stroke-dasharray="2 1.06"/><circle cx="6.5" cy="6.5" r="3.3" fill="#fff"/><circle cx="6.5" cy="6.5" r="1.4" fill="#c19652"/></svg>
<div class="a" style="left:949px;top:660px;width:1px;height:12px;background:#5a6576"></div>
<div class="a tx" style="left:962.00px;top:661.11px;font-size:10.5px;color:#f4f6fa;font-weight:bold;">04:58 p. m.</div>
</body></html>
